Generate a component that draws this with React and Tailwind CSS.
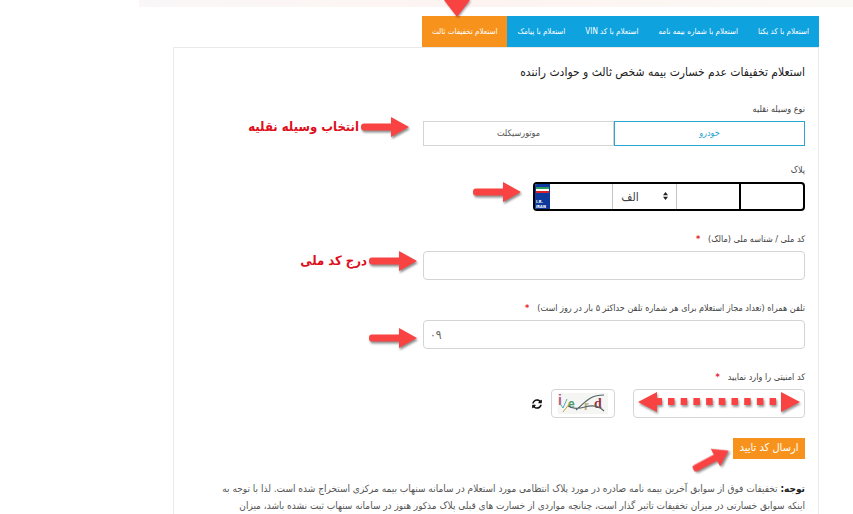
import { useState } from 'react';
import clsx from 'clsx';

const tabs = [
  'استعلام با کد یکتا',
  'استعلام با شماره بیمه نامه',
  'استعلام با کد VIN',
  'استعلام با پیامک',
  'استعلام تخفیفات ثالث',
];

const vehicles = [
  { id: 'car', label: 'خودرو' },
  { id: 'motorcycle', label: 'موتورسیکلت' },
];

const inputClass =
  'h-[29px] w-full min-w-0 rounded border border-[#d4d4d4] bg-white px-1.5 text-[12px] text-[#666] outline-none';

function Arrow({ className = 'h-5 w-12' }) {
  return (
    <svg
      viewBox="0 0 48 20"
      preserveAspectRatio="none"
      className={clsx('shrink-0 drop-shadow-[1px_2px_1px_rgba(0,0,0,0.45)]', className)}
      aria-hidden="true"
    >
      <path d="M3 6.500h27V0l18 10-18 10v-6.500H3a3 3 0 0 1-3-3v-1a3 3 0 0 1 3-3z" fill="#f94343" />
    </svg>
  );
}

function DoubleArrow() {
  return (
    <svg
      viewBox="0 0 162 20"
      className="pointer-events-none absolute inset-x-[5px] top-[3px] h-5 drop-shadow-[1px_2px_1px_rgba(0,0,0,0.4)]"
      aria-hidden="true"
    >
      <path d="M0 10 19 0v6h5v7h-5v7zM162 10 143 0v20z" fill="#f94343" />
      <path d="M30 9.500h114" stroke="#f94343" strokeWidth="7" strokeDasharray="6.500 6.200" />
    </svg>
  );
}

function Note({ text, className }) {
  return (
    <div dir="ltr" className={clsx('flex h-5 w-[236px] shrink-0 items-center justify-end gap-0.5', className)}>
      {text && (
        <span dir="rtl" className="whitespace-nowrap text-[13px] leading-4 font-bold text-[#dd101c]">
          {text}
        </span>
      )}
      <Arrow />
    </div>
  );
}

function FieldLabel({ htmlFor, required, children }) {
  return (
    <label htmlFor={htmlFor} className="block h-4 whitespace-nowrap text-[9px] leading-4 text-[#444]">
      {children}
      {required && <span className="mr-2 font-bold text-[#e8202a]">*</span>}
    </label>
  );
}

function Plate() {
  return (
    <div
      dir="ltr"
      className="flex h-[29px] w-[272px] overflow-hidden rounded border-2 border-black bg-white text-[12px] text-[#444]"
    >
      <div className="flex w-[15px] shrink-0 flex-col justify-between bg-[#0d399c] pt-[3px] text-white">
        <svg viewBox="0 0 13 6" className="h-1.5 w-full px-px" preserveAspectRatio="none" aria-hidden="true">
          <path d="M0 0h13v2H0z" fill="#2b9a5a" />
          <path d="M0 2h13v2H0z" fill="#fff" />
          <path d="M0 4h13v2H0z" fill="#d8202c" />
        </svg>
        <span className="pl-px text-[4px] leading-[5px] font-bold">
          I.R.
          <br />
          IRAN
        </span>
      </div>
      <input aria-label="دو رقم اول پلاک" className="min-w-0 flex-1 outline-none" />
      <div className="relative flex-1 border-x border-[#c4c4c4]">
        <select aria-label="حرف پلاک" className="h-full w-full appearance-none bg-white pl-2 outline-none">
          <option>الف</option>
          <option>ب</option>
          <option>ج</option>
        </select>
        <svg viewBox="0 0 5 8" className="pointer-events-none absolute top-2 right-2 h-2 w-[5px]" aria-hidden="true">
          <path d="M0 3.200 2.500 0 5 3.200zM0 4.800 2.500 8 5 4.800z" fill="#222" />
        </svg>
      </div>
      <input aria-label="سه رقم پلاک" className="min-w-0 flex-1 outline-none" />
      <input aria-label="کد شهر پلاک" className="min-w-0 flex-1 border-l-2 border-black outline-none" />
    </div>
  );
}

function Captcha() {
  return (
    <div
      dir="ltr"
      className="flex h-[29px] w-16 items-center justify-center rounded border border-[#d4d4d4] bg-white"
    >
      <svg viewBox="0 0 50 21" className="h-[21px] w-[50px]" role="img" aria-label="تصویر امنیتی">
        <path d="M0 0h50v21H0z" fill="#f5f5f3" />
        <g fontFamily="Liberation Sans" fontWeight="bold">
          <text x="0" y="12" fontSize="14" fill="#b0607c">i</text>
          <text x="10" y="15" fontSize="12" fill="#4c9a68">e</text>
          <text x="26" y="17" fontSize="12" fill="#b5a878">r</text>
          <text x="36" y="15" fontSize="14" fill="#96363c" fontFamily="Liberation Serif">d</text>
        </g>
        <path d="M3 12l2 3 4-9" fill="none" stroke="#4db0ac" />
        <path d="M5 19 12 10" fill="none" stroke="#c8a43c" />
        <path d="M10 13c6 3 10 3 17 1s14-1 19 4M18 17C26 11 30 2 46 2" fill="none" stroke="#55666a" strokeWidth="1.200" />
      </svg>
    </div>
  );
}

function RefreshIcon() {
  return (
    <svg viewBox="0 0 512 512" className="size-2.5" fill="#111" aria-hidden="true">
      <path d="M370.700 133.300C339.500 104 298.900 88 255.800 88c-77.500.1-144.300 53.200-162.800 126.900-1.300 5.400-6.100 9.100-11.700 9.100H24.100c-7.500 0-13.200-6.800-11.800-14.200C33.900 94.900 134.800 8 256 8c66.400 0 126.800 26.100 171.300 68.700L463 41c15.100-15.100 41-4.400 41 17v134c0 13.300-10.700 24-24 24H346c-21.400 0-32.100-25.900-17-41zM32 296h134c21.400 0 32.100 25.900 17 41l-41.800 41.800c31.300 29.300 71.800 45.300 114.900 45.200 77.400-.1 144.300-53.100 162.800-126.800 1.300-5.400 6.100-9.200 11.700-9.200h57.300c7.500 0 13.200 6.800 11.800 14.200C478.100 417.100 377.200 504 256 504c-66.400 0-126.800-26.100-171.300-68.700L49 471c-15.100 15.100-41 4.400-41-17V320c0-13.300 10.700-24 24-24z" />
    </svg>
  );
}

export default function App() {
  const [tab, setTab] = useState(4);
  const [vehicle, setVehicle] = useState('car');

  return (
    <div
      dir="rtl"
      lang="fa"
      className="flex min-h-screen flex-col overflow-x-hidden bg-white font-['DejaVu_Sans_Condensed','DejaVu_Sans',sans-serif] text-[#333]"
    >
      <div className="ml-[139px] h-[7px] bg-linear-to-r from-[#faf7f8] via-[#fdf4f1] to-[#fbf9f6]" />

      <main className="mt-[9px] mr-[34px] ml-[173px] flex flex-1 flex-col">
        <nav className="flex">
          {tabs.map((label, i) => (
            <button
              key={label}
              type="button"
              onClick={() => setTab(i)}
              className={clsx(
                'relative h-[31px] px-2.5 text-[8px] whitespace-nowrap text-white',
                i === tab ? 'bg-[#f7931d]' : 'bg-[#0ea2df]',
              )}
            >
              {label}
              {i === tab && (
                <svg
                  viewBox="0 0 26 17"
                  className="pointer-events-none absolute -top-4 left-[22px] h-[17px] w-[26px] drop-shadow-[1px_1px_1px_rgba(0,0,0,0.4)]"
                  aria-hidden="true"
                >
                  <path d="M0 0h26L13 17z" fill="#f94343" />
                </svg>
              )}
            </button>
          ))}
        </nav>

        <form
          className="flex-1 border border-b-0 border-[#e9e9e9] px-[13px] pt-3.5"
          onSubmit={(e) => e.preventDefault()}
        >
          <h1 className="text-[12px] leading-5 text-[#222]">استعلام تخفیفات عدم خسارت بیمه شخص ثالث و حوادث راننده</h1>

          <fieldset className="mt-[19px]">
            <legend className="mb-1 h-4 text-[9px] leading-4 text-[#444]">نوع وسیله نقلیه</legend>
            <div className="flex">
              <div className="flex h-[25px] flex-1">
                {vehicles.map(({ id, label }) => (
                  <label
                    key={id}
                    className={clsx(
                      'flex flex-1 cursor-pointer items-center justify-center border text-[9px]',
                      vehicle === id ? 'border-[#2ba5cf] text-[#2ba5cf]' : 'border-[#d4d4d4] text-[#555]',
                    )}
                  >
                    <input
                      type="radio"
                      name="vehicle"
                      className="sr-only"
                      checked={vehicle === id}
                      onChange={() => setVehicle(id)}
                    />
                    {label}
                  </label>
                ))}
              </div>
              <Note text="انتخاب وسیله نقلیه" className="-mt-1 pr-3.5" />
            </div>
          </fieldset>

          <div className="mt-4 flex flex-col gap-5">
            <div>
              <FieldLabel>پلاک</FieldLabel>
              <div className="mt-1 flex">
                <Plate />
                <Note className="pr-3" />
              </div>
            </div>

            <div>
              <FieldLabel htmlFor="national-id" required>
                کد ملی / شناسه ملی (مالک)
              </FieldLabel>
              <div className="mt-1 flex">
                <input id="national-id" className={inputClass} />
                <Note text="درج کد ملی" className="pr-1.5" />
              </div>
            </div>

            <div>
              <FieldLabel htmlFor="mobile" required>
                تلفن همراه (تعداد مجاز استعلام برای هر شماره تلفن حداکثر ۵ بار در روز است)
              </FieldLabel>
              <div className="mt-1 flex">
                <input id="mobile" dir="ltr" defaultValue="۰۹" className={inputClass} />
                <Note className="mt-2 pr-1.5" />
              </div>
            </div>

            <div>
              <FieldLabel htmlFor="captcha" required>
                کد امنیتی را وارد نمایید
              </FieldLabel>
              <div className="mt-1 flex items-center">
                <div className="relative flex w-[172px]">
                  <input id="captcha" className={inputClass} />
                  <DoubleArrow />
                </div>
                <div className="mr-[18px] flex items-center gap-[9px]">
                  <Captcha />
                  <button type="button" aria-label="تصویر جدید">
                    <RefreshIcon />
                  </button>
                </div>
              </div>
            </div>

            <div className="flex h-[21px] gap-0.5">
              <button type="submit" className="w-[72px] bg-[#f7931d] text-[11px] whitespace-nowrap text-white">
                ارسال کد تایید
              </button>
              <Arrow className="mt-3 h-5 w-10 -rotate-28" />
            </div>
          </div>

          <p className="mt-[21px] text-[10px] leading-[17px] text-[#555]">
            <strong className="text-[#222]">توجه:</strong> تخفیفات فوق از سوابق آخرین بیمه نامه صادره در مورد پلاک انتظامی مورد
            استعلام در سامانه سنهاب بیمه مرکزی استخراج شده است. لذا با توجه به
            <br />
            اینکه سوابق خسارتی در میزان تخفیفات تاثیر گذار است، چنانچه مواردی از خسارت های قبلی پلاک مذکور هنوز در سامانه
            سنهاب ثبت نشده باشد، میزان
          </p>
        </form>
      </main>
    </div>
  );
}
